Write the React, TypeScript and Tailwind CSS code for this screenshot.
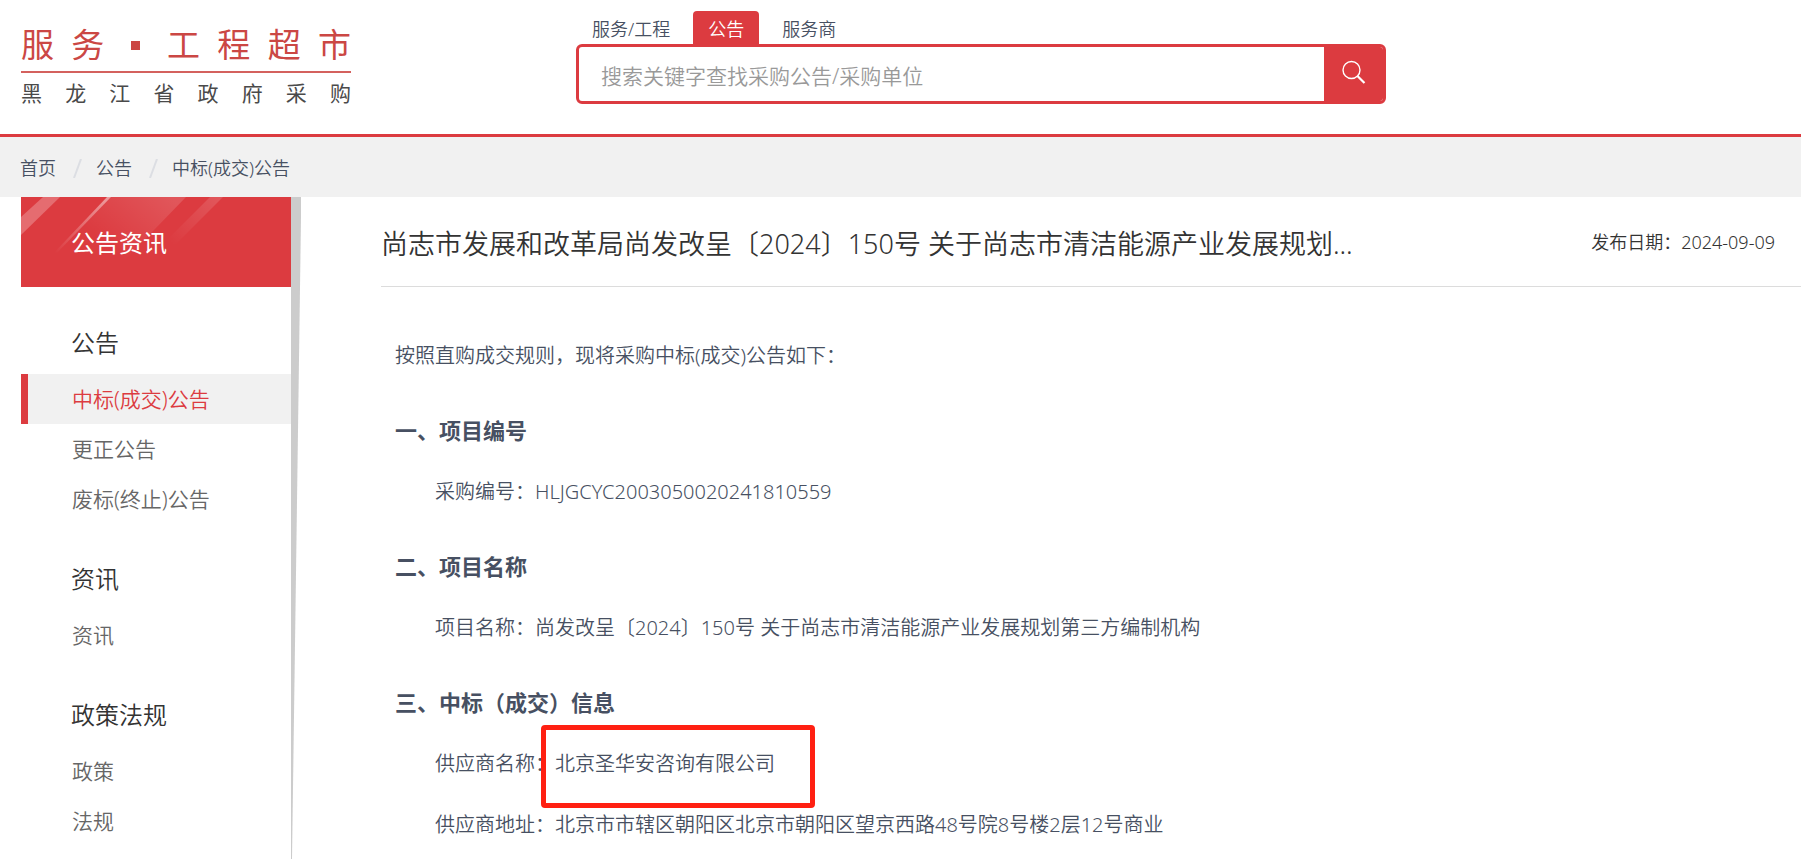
import { Fragment } from "react";

const TABS = ["服务/工程", "公告", "服务商"];

const CRUMBS = ["首页", "公告", "中标(成交)公告"];

const MENU = [
  { title: "公告", items: ["中标(成交)公告", "更正公告", "废标(终止)公告"] },
  { title: "资讯", items: ["资讯"] },
  { title: "政策法规", items: ["政策", "法规"] },
];

const ACTIVE_TAB = "公告";
const ACTIVE_ITEM = "中标(成交)公告";

function Logo() {
  return (
    <a href="#" className="mt-[26px] block w-[330px] font-normal">
      <div className="flex items-center justify-between border-b-2 border-[#d4615e] pb-[7px] text-[33px] leading-[38px] text-[#cb4744]">
        <span>服</span>
        <span>务</span>
        <span className="flex w-7 justify-center">
          <i className="size-[9px] bg-[#cb4744]" />
        </span>
        <span>工</span>
        <span>程</span>
        <span>超</span>
        <span>市</span>
      </div>
      <div className="mt-1.5 flex justify-between text-[21px] leading-7 text-[#4a4a4a]">
        {"黑龙江省政府采购".split("").map((c) => (
          <span key={c}>{c}</span>
        ))}
      </div>
    </a>
  );
}

function Search() {
  return (
    <form className="ml-[225px] w-[810px] pt-[11px]" onSubmit={(e) => e.preventDefault()}>
      <div className="flex gap-2 pl-px">
        {TABS.map((t) => (
          <button
            key={t}
            type="button"
            className={`h-[33px] rounded-t px-[15px] pt-0.5 text-lg leading-7 ${
              t === ACTIVE_TAB ? "bg-[#dc3b40] text-white" : "text-[#475062]"
            }`}
          >
            {t}
          </button>
        ))}
      </div>
      <div className="flex h-[60px] overflow-hidden rounded-md border-3 border-[#dc3b40]">
        <input
          type="text"
          aria-label="搜索"
          placeholder="搜索关键字查找采购公告/采购单位"
          className="min-w-0 flex-1 pt-1.5 pl-[22px] text-[21px] text-[#475062] outline-none placeholder:text-[#999]"
        />
        <button type="submit" aria-label="搜索" className="flex w-[59px] justify-center bg-[#dc3b40] pt-3">
          <svg width="26" height="26" viewBox="0 0 26 26" fill="none" stroke="#fff">
            <circle cx="10.5" cy="11" r="8.5" strokeWidth="1.4" />
            <path d="M16.5 17l7 7" strokeWidth="2.2" />
          </svg>
        </button>
      </div>
    </form>
  );
}

function Banner() {
  return (
    <div className="relative h-[90px] overflow-hidden bg-[#dc3b40]">
      <svg className="absolute inset-0" width="270" height="90" viewBox="0 0 270 90">
        <defs>
          <linearGradient id="wide" x1="150" y1="0" x2="100" y2="60" gradientUnits="userSpaceOnUse">
            <stop offset="0" stopColor="#fff" stopOpacity="0.14" />
            <stop offset="1" stopColor="#fff" stopOpacity="0" />
          </linearGradient>
          <linearGradient id="thin" x1="88" y1="0" x2="34" y2="56" gradientUnits="userSpaceOnUse">
            <stop offset="0" stopColor="#fff" stopOpacity="0.5" />
            <stop offset="1" stopColor="#fff" stopOpacity="0" />
          </linearGradient>
          <linearGradient id="tail" x1="196" y1="0" x2="150" y2="46" gradientUnits="userSpaceOnUse">
            <stop offset="0" stopColor="#fff" stopOpacity="0.14" />
            <stop offset="1" stopColor="#fff" stopOpacity="0" />
          </linearGradient>
        </defs>
        <path d="M22 0h17L0 38V20z" fill="#fff" fillOpacity="0.25" />
        <path d="M90 0h75l-64 66H26z" fill="url(#wide)" />
        <path d="M86 0h4L32 60h-3z" fill="url(#thin)" />
        <path d="M189 0h13l-52 52h-13z" fill="url(#tail)" />
      </svg>
      <h2 className="relative pl-[50px] text-2xl leading-[92px] font-normal text-white">公告资讯</h2>
    </div>
  );
}

function Sidebar() {
  return (
    <aside className="w-[270px] shrink-0">
      <Banner />
      <nav className="pt-px">
        {MENU.map((g) => (
          <div key={g.title}>
            <h3 className="pt-[37px] pb-[13px] pl-[50px] text-2xl leading-9 text-[#333]">{g.title}</h3>
            <ul>
              {g.items.map((item) => (
                <li key={item}>
                  <a
                    href="#"
                    className={`block border-l-[7px] pl-11 text-[21px] leading-[50px] ${
                      item === ACTIVE_ITEM
                        ? "border-[#dc3b40] bg-[#f1f1f1] text-[#dc3b40]"
                        : "border-transparent text-[#666]"
                    }`}
                  >
                    {item}
                  </a>
                </li>
              ))}
            </ul>
          </div>
        ))}
      </nav>
    </aside>
  );
}

function Article() {
  return (
    <main className="ml-20 min-w-0 flex-1">
      <div className="flex h-[90px] items-center justify-between border-b border-[#dcdcdc] pr-[26px] text-[#333]">
        <h1 className="pt-1.5 text-[27px]">
          尚志市发展和改革局尚发改呈〔2024〕150号 关于尚志市清洁能源产业发展规划...
        </h1>
        <span className="text-lg">发布日期：2024-09-09</span>
      </div>
      <article className="pt-[38px] pl-3.5 text-xl leading-[61px] text-[#475062] [&_h4]:pt-3.5 [&_h4]:text-[22px] [&_h4]:font-bold">
        <p>按照直购成交规则，现将采购中标(成交)公告如下：</p>
        <h4>一、项目编号</h4>
        <p className="pl-10">采购编号：HLJGCYC2003050020241810559</p>
        <h4>二、项目名称</h4>
        <p className="pl-10">项目名称：尚发改呈〔2024〕150号 关于尚志市清洁能源产业发展规划第三方编制机构</p>
        <h4>三、中标（成交）信息</h4>
        <p className="flex pl-10">
          供应商名称：
          <span className="relative">
            北京圣华安咨询有限公司
            <i className="absolute -top-2 -right-10 -bottom-3.5 -left-3.5 rounded border-5 border-[#ff2012]" />
          </span>
        </p>
        <p className="pl-10">供应商地址：北京市市辖区朝阳区北京市朝阳区望京西路48号院8号楼2层12号商业</p>
      </article>
    </main>
  );
}

export default function App() {
  return (
    <div
      lang="zh-CN"
      className="flex min-h-screen flex-col bg-white font-['Noto_Sans','Noto_Sans_CJK_SC',sans-serif] font-[350]"
    >
      <header className="flex h-[137px] border-b-3 border-[#dc3b40] pl-[21px]">
        <Logo />
        <Search />
      </header>
      <div className="flex h-[60px] items-center bg-[#f1f1f1] pt-0.5 pl-5 text-lg text-[#475062]">
        {CRUMBS.map((c, i) => (
          <Fragment key={c}>
            {i > 0 && (
              <svg className="mr-3.5 ml-[17px]" width="9" height="19" viewBox="0 0 9 19" stroke="#dcdee3" strokeWidth="2">
                <path d="M1 19L8 0" />
              </svg>
            )}
            <a href="#">{c}</a>
          </Fragment>
        ))}
      </div>
      <div className="flex flex-1 pl-[21px]">
        <Sidebar />
        {/* tapering edge of the sidebar */}
        <div className="w-2.5 shrink-0 bg-[#ccc] [clip-path:polygon(0_0,100%_0,100%_3%,10%_100%,0_100%)]" />
        <Article />
      </div>
    </div>
  );
}
